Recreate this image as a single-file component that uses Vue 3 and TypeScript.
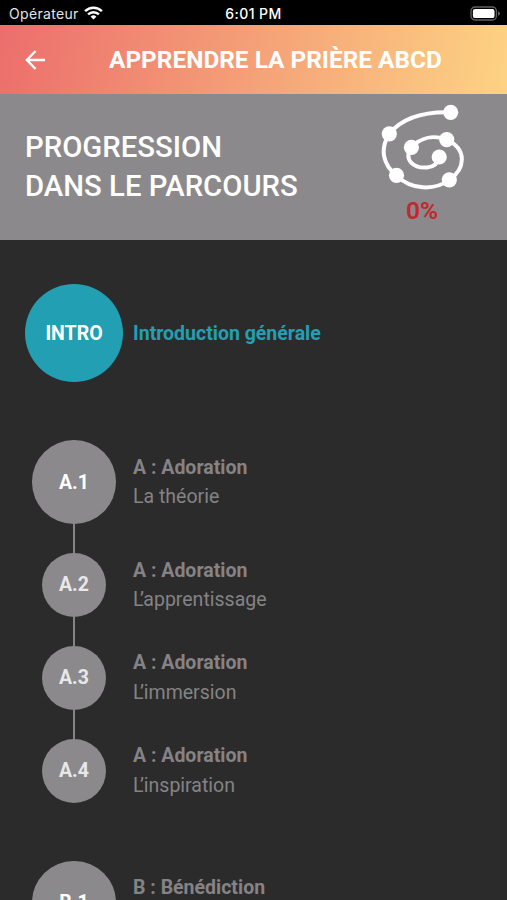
<script setup lang="ts">
interface Step {
  code: string
  title: string
  article?: string
  subtitle: string
  lead?: boolean
}

const progress = 0

const sections: Step[][] = [
  [
    { code: 'A.1', title: 'A : Adoration', subtitle: 'La théorie', lead: true },
    { code: 'A.2', title: 'A : Adoration', article: 'L', subtitle: '’apprentissage' },
    { code: 'A.3', title: 'A : Adoration', article: 'L', subtitle: '’immersion' },
    { code: 'A.4', title: 'A : Adoration', article: 'L', subtitle: '’inspiration' },
  ],
  [{ code: 'B.1', title: 'B : Bénédiction', subtitle: 'La théorie', lead: true }],
]
</script>

<template>
  <div class="screen">
    <div class="status">
      <div class="carrier">
        <span>Opérateur</span>
        <svg class="wifi" width="19" height="14" viewBox="0 0 19 14">
          <g fill="none" stroke="#fff" stroke-width="2.5">
            <path d="M1.1 5.2A12 12 0 0 1 17.9 5.2" />
            <path d="M4.1 8.4A7.8 7.8 0 0 1 14.9 8.4" />
          </g>
          <path d="M6.6 10.7A4.2 4.2 0 0 1 12.4 10.7L9.5 13.6Z" fill="#fff" />
        </svg>
      </div>
      <span class="clock">6:01 PM</span>
      <div class="power">
        <svg width="31" height="15" viewBox="0 0 31 15">
          <rect x="1" y="1" width="25.4" height="13" rx="4" fill="none" stroke="#626262" stroke-width="1.3" />
          <rect x="2.9" y="2.9" width="21.6" height="9.2" rx="2.2" fill="#fff" />
          <path d="M28 5.2Q30 6 30 7.5T28 9.8Z" fill="#626262" />
        </svg>
      </div>
    </div>

    <header class="header">
      <svg class="back" width="20" height="20" viewBox="0 0 20 20">
        <path d="M20 10H2M10.6 1L1.8 10L10.6 19" fill="none" stroke="#fff" stroke-width="2.3" />
      </svg>
      <h1>APPRENDRE LA PRIÈRE ABCD</h1>
    </header>

    <section class="progress">
      <h2>PROGRESSION<br />DANS LE PARCOURS</h2>
      <div class="gauge">
        <svg width="84" height="88" viewBox="380 103 84 88">
          <path
            d="M450.7 112.3C424 111.500 402 118 389.3 133.8C379.500 149 383 165 396.5 175.3C411 190 434 191 449.200 180C466 168 467 149 446.500 139.500C434 135 421 137 411.400 147.300C403 160 414 168.500 427 167.500C434 167 438 163 439.500 157"
            fill="none"
            stroke="#fff"
            stroke-width="4"
          />
          <g fill="#fff">
            <circle cx="450.7" cy="112.3" r="7.6" />
            <circle cx="389.3" cy="133.8" r="7.6" />
            <circle cx="396.5" cy="175.3" r="7.6" />
            <circle cx="449.3" cy="179.8" r="7.6" />
            <circle cx="446.7" cy="139.6" r="7.6" />
            <circle cx="411.4" cy="147.3" r="7.6" />
            <circle cx="439.2" cy="157" r="7.6" />
          </g>
        </svg>
        <span class="percent">{{ progress }}%</span>
      </div>
    </section>

    <main class="path">
      <div class="step intro">
        <div class="marker"><div class="bubble">INTRO</div></div>
        <strong>Introduction générale</strong>
      </div>
      <div v-for="(section, index) in sections" :key="index" class="section">
        <template v-for="(step, position) in section" :key="step.code">
          <div v-if="position > 0" class="connector"></div>
          <div class="step" :class="{ lead: step.lead }">
            <div class="marker"><div class="bubble">{{ step.code }}</div></div>
            <div class="label">
              <strong>{{ step.title }}</strong>
              <span><span v-if="step.article" class="article">{{ step.article }}</span>{{ step.subtitle }}</span>
            </div>
          </div>
        </template>
      </div>
    </main>
  </div>
</template>

<style>
body {
  overflow: hidden;
  background: #2b2b2b;
}
</style>

<style scoped>
.screen {
  display: flex;
  flex-direction: column;
  height: 900px;
  overflow: hidden;
  box-sizing: border-box;
  background: #2b2b2b;
  font-family: Roboto, 'Liberation Sans', sans-serif;
}

.status {
  display: grid;
  grid-template-columns: 1fr auto 1fr;
  align-items: center;
  flex: none;
  height: 25.4px;
  padding: 1px 6px 0 9px;
  box-sizing: border-box;
  background: #000;
  color: #fff;
  font-family: Inter, sans-serif;
  font-size: 14px;
}

.carrier {
  display: flex;
  align-items: center;
  gap: 5px;
  color: #e4e4e4;
  letter-spacing: 0.32px;
}

.clock {
  margin-right: 3px;
  font-weight: 500;
  letter-spacing: 0.45px;
}

.power {
  display: flex;
  justify-content: flex-end;
}

.header {
  display: flex;
  align-items: center;
  flex: none;
  height: 68.3px;
  padding-left: 25px;
  background: linear-gradient(100deg, #ec6e6c 0%, #fdd383 100%);
}

.header h1 {
  margin: 0 0 0 64px;
  color: #fff;
  font-size: 24.4px;
  font-weight: 700;
  white-space: nowrap;
}

.progress {
  display: flex;
  justify-content: space-between;
  flex: none;
  height: 146.5px;
  padding: 0 43px 0 25px;
  box-sizing: border-box;
  background: #8b898b;
}

.progress h2 {
  align-self: center;
  margin: 0;
  padding-top: 1px;
  color: #fff;
  font-size: 29.3px;
  font-weight: 500;
  line-height: 39px;
  white-space: nowrap;
}

.gauge {
  display: flex;
  flex-direction: column;
  align-items: center;
  padding-top: 9.3px;
}

.percent {
  margin-top: 4px;
  color: #c1272d;
  font-size: 24.5px;
  font-weight: 600;
  line-height: 31px;
}

.path {
  display: flex;
  flex-direction: column;
  gap: 58.2px;
  padding: 44.1px 0 0 25px;
}

.step {
  display: flex;
  align-items: center;
  gap: 10px;
  flex: none;
  color: #858385;
  font-size: 19.5px;
  line-height: 29.3px;
  white-space: nowrap;
}

.step strong {
  font-weight: 700;
}

.marker {
  display: flex;
  justify-content: center;
  width: 98px;
}

.bubble {
  display: flex;
  align-items: center;
  justify-content: center;
  width: 64px;
  height: 64px;
  border-radius: 50%;
  background: #8b898b;
  color: #e9e8e9;
  font-weight: 700;
}

.lead .bubble {
  width: 83.5px;
  height: 83.5px;
  color: #fff;
}

.intro {
  color: #239fb3;
}

.intro .bubble {
  width: 98px;
  height: 98px;
  background: #239fb3;
  color: #fff;
}

.label {
  display: flex;
  flex-direction: column;
}

.article {
  letter-spacing: -3.6px;
}

.connector {
  width: 2.5px;
  height: 28.9px;
  margin-left: 47.8px;
  background: #858385;
}
</style>
